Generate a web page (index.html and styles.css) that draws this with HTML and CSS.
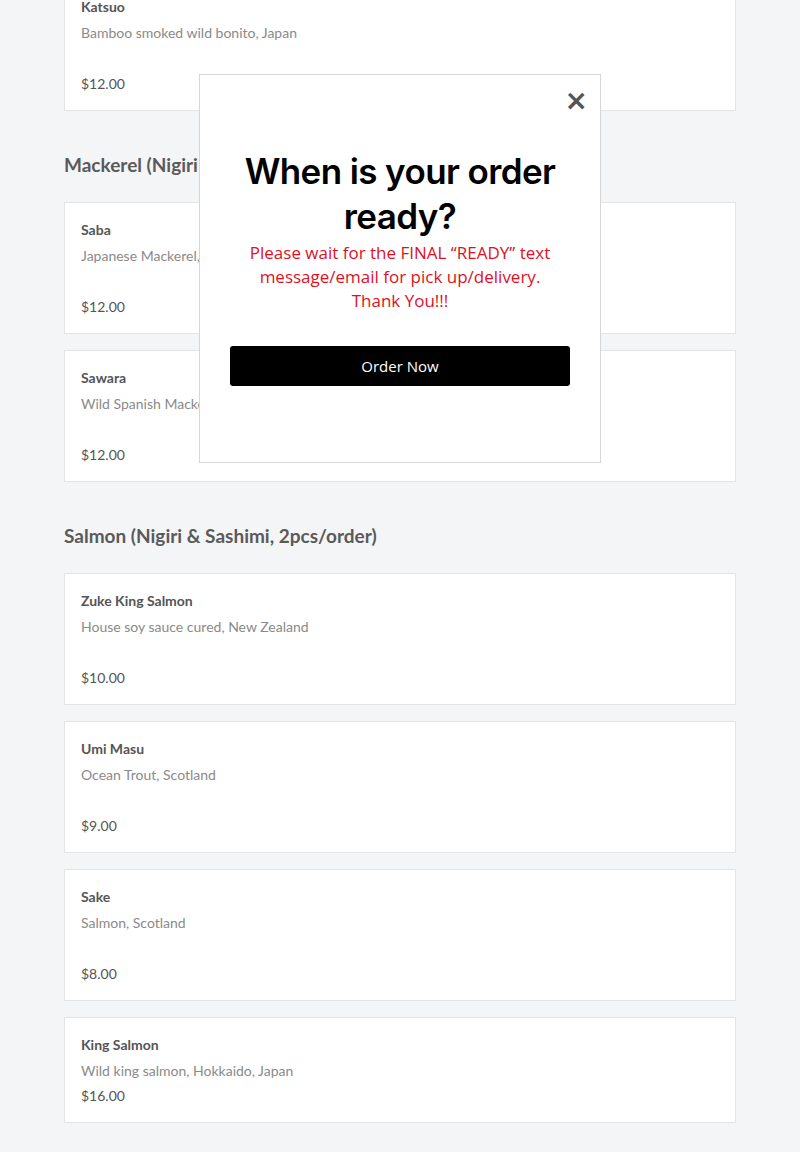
FILE: index.html
```html
<!DOCTYPE html>
<html lang="en">
<head>
    <meta charset="UTF-8">
    <title>Menu</title>
    <link rel="stylesheet" href="styles.css">
</head>
<body>
<div class="menu">
    <div class="list">
        <div class="item">
            <div class="name">Katsuo</div>
            <div class="desc">Bamboo smoked wild bonito, Japan</div>
            <div class="gap"></div>
            <div class="price">$12.00</div>
        </div>
    </div>

    <h2 class="cat">Mackerel (Nigiri &amp; Sashimi, 2pcs/order)</h2>
    <div class="list">
        <div class="item">
            <div class="name">Saba</div>
            <div class="desc">Japanese Mackerel, Japan</div>
            <div class="gap"></div>
            <div class="price">$12.00</div>
        </div>
        <div class="item">
            <div class="name">Sawara</div>
            <div class="desc">Wild Spanish Mackerel, Japan</div>
            <div class="gap"></div>
            <div class="price">$12.00</div>
        </div>
    </div>

    <h2 class="cat">Salmon (Nigiri &amp; Sashimi, 2pcs/order)</h2>
    <div class="list">
        <div class="item">
            <div class="name">Zuke King Salmon</div>
            <div class="desc">House soy sauce cured, New Zealand</div>
            <div class="gap"></div>
            <div class="price">$10.00</div>
        </div>
        <div class="item">
            <div class="name">Umi Masu</div>
            <div class="desc">Ocean Trout, Scotland</div>
            <div class="gap"></div>
            <div class="price">$9.00</div>
        </div>
        <div class="item">
            <div class="name">Sake</div>
            <div class="desc">Salmon, Scotland</div>
            <div class="gap"></div>
            <div class="price">$8.00</div>
        </div>
        <div class="item">
            <div class="name">King Salmon</div>
            <div class="desc">Wild king salmon, Hokkaido, Japan</div>
            <div class="price">$16.00</div>
        </div>
    </div>
</div>

<div class="popup">
    <div class="close">&times;</div>
    <h1 class="ask">When is your order ready?</h1>
    <p class="note">Please wait for the FINAL “READY” text message/email for pick up/delivery. Thank You!!!</p>
    <div class="order">Order Now</div>
</div>
</body>
</html>
```

FILE: styles.css
```css
*{
    padding: 0;
    margin: 0;
    box-sizing: border-box;
}
body{
    background: #f4f5f7;
    font-family: Lato, "Liberation Sans", sans-serif;
    color: #555;
}
.menu{
    width: 672px;
    margin: -21px auto 0;
    padding-bottom: 40px;
}
.list{
    display: flex;
    flex-direction: column;
    gap: 16px;
}
.item{
    background: #fff;
    border: 1px solid #e3e4e6;
    padding: 16px 16px 15px;
    font-size: 14px;
    line-height: 22px;
}
.name{
    font-weight: 700;
    color: #555;
}
.desc{
    margin-top: 4px;
    color: #8a8a8a;
}
.gap{
    height: 26px;
}
.price{
    margin-top: 3px;
    color: #555;
}
.cat{
    font-size: 19px;
    line-height: 24px;
    font-weight: 700;
    color: #5a5a5a;
    margin: 42px 0 25px;
}
/* popup over the menu */
.popup{
    position: absolute;
    left: 199px;
    top: 74px;
    width: 402px;
    height: 389px;
    background: #fff;
    border: 1px solid #d6d6d6;
    padding: 74px 30px 0;
    text-align: center;
}
.close{
    position: absolute;
    right: 12px;
    top: 12px;
    font-size: 28px;
    line-height: 28px;
    color: #555;
    font-family: "DejaVu Sans", sans-serif;
    font-weight: bold;
}
.ask{
    font-family: Inter, sans-serif;
    font-size: 35px;
    line-height: 45px;
    font-weight: 600;
    color: #000;
    letter-spacing: -0.6px;
}
.note{
    font-family: "Open Sans", sans-serif;
    font-size: 17px;
    line-height: 24px;
    color: #e0101f;
    padding: 2px 10px 0;
}
.order{
    margin-top: 33px;
    height: 40px;
    line-height: 40px;
    background: #000;
    color: #fff;
    border-radius: 3px;
    font-family: "Open Sans", sans-serif;
    font-size: 15px;
}
```
